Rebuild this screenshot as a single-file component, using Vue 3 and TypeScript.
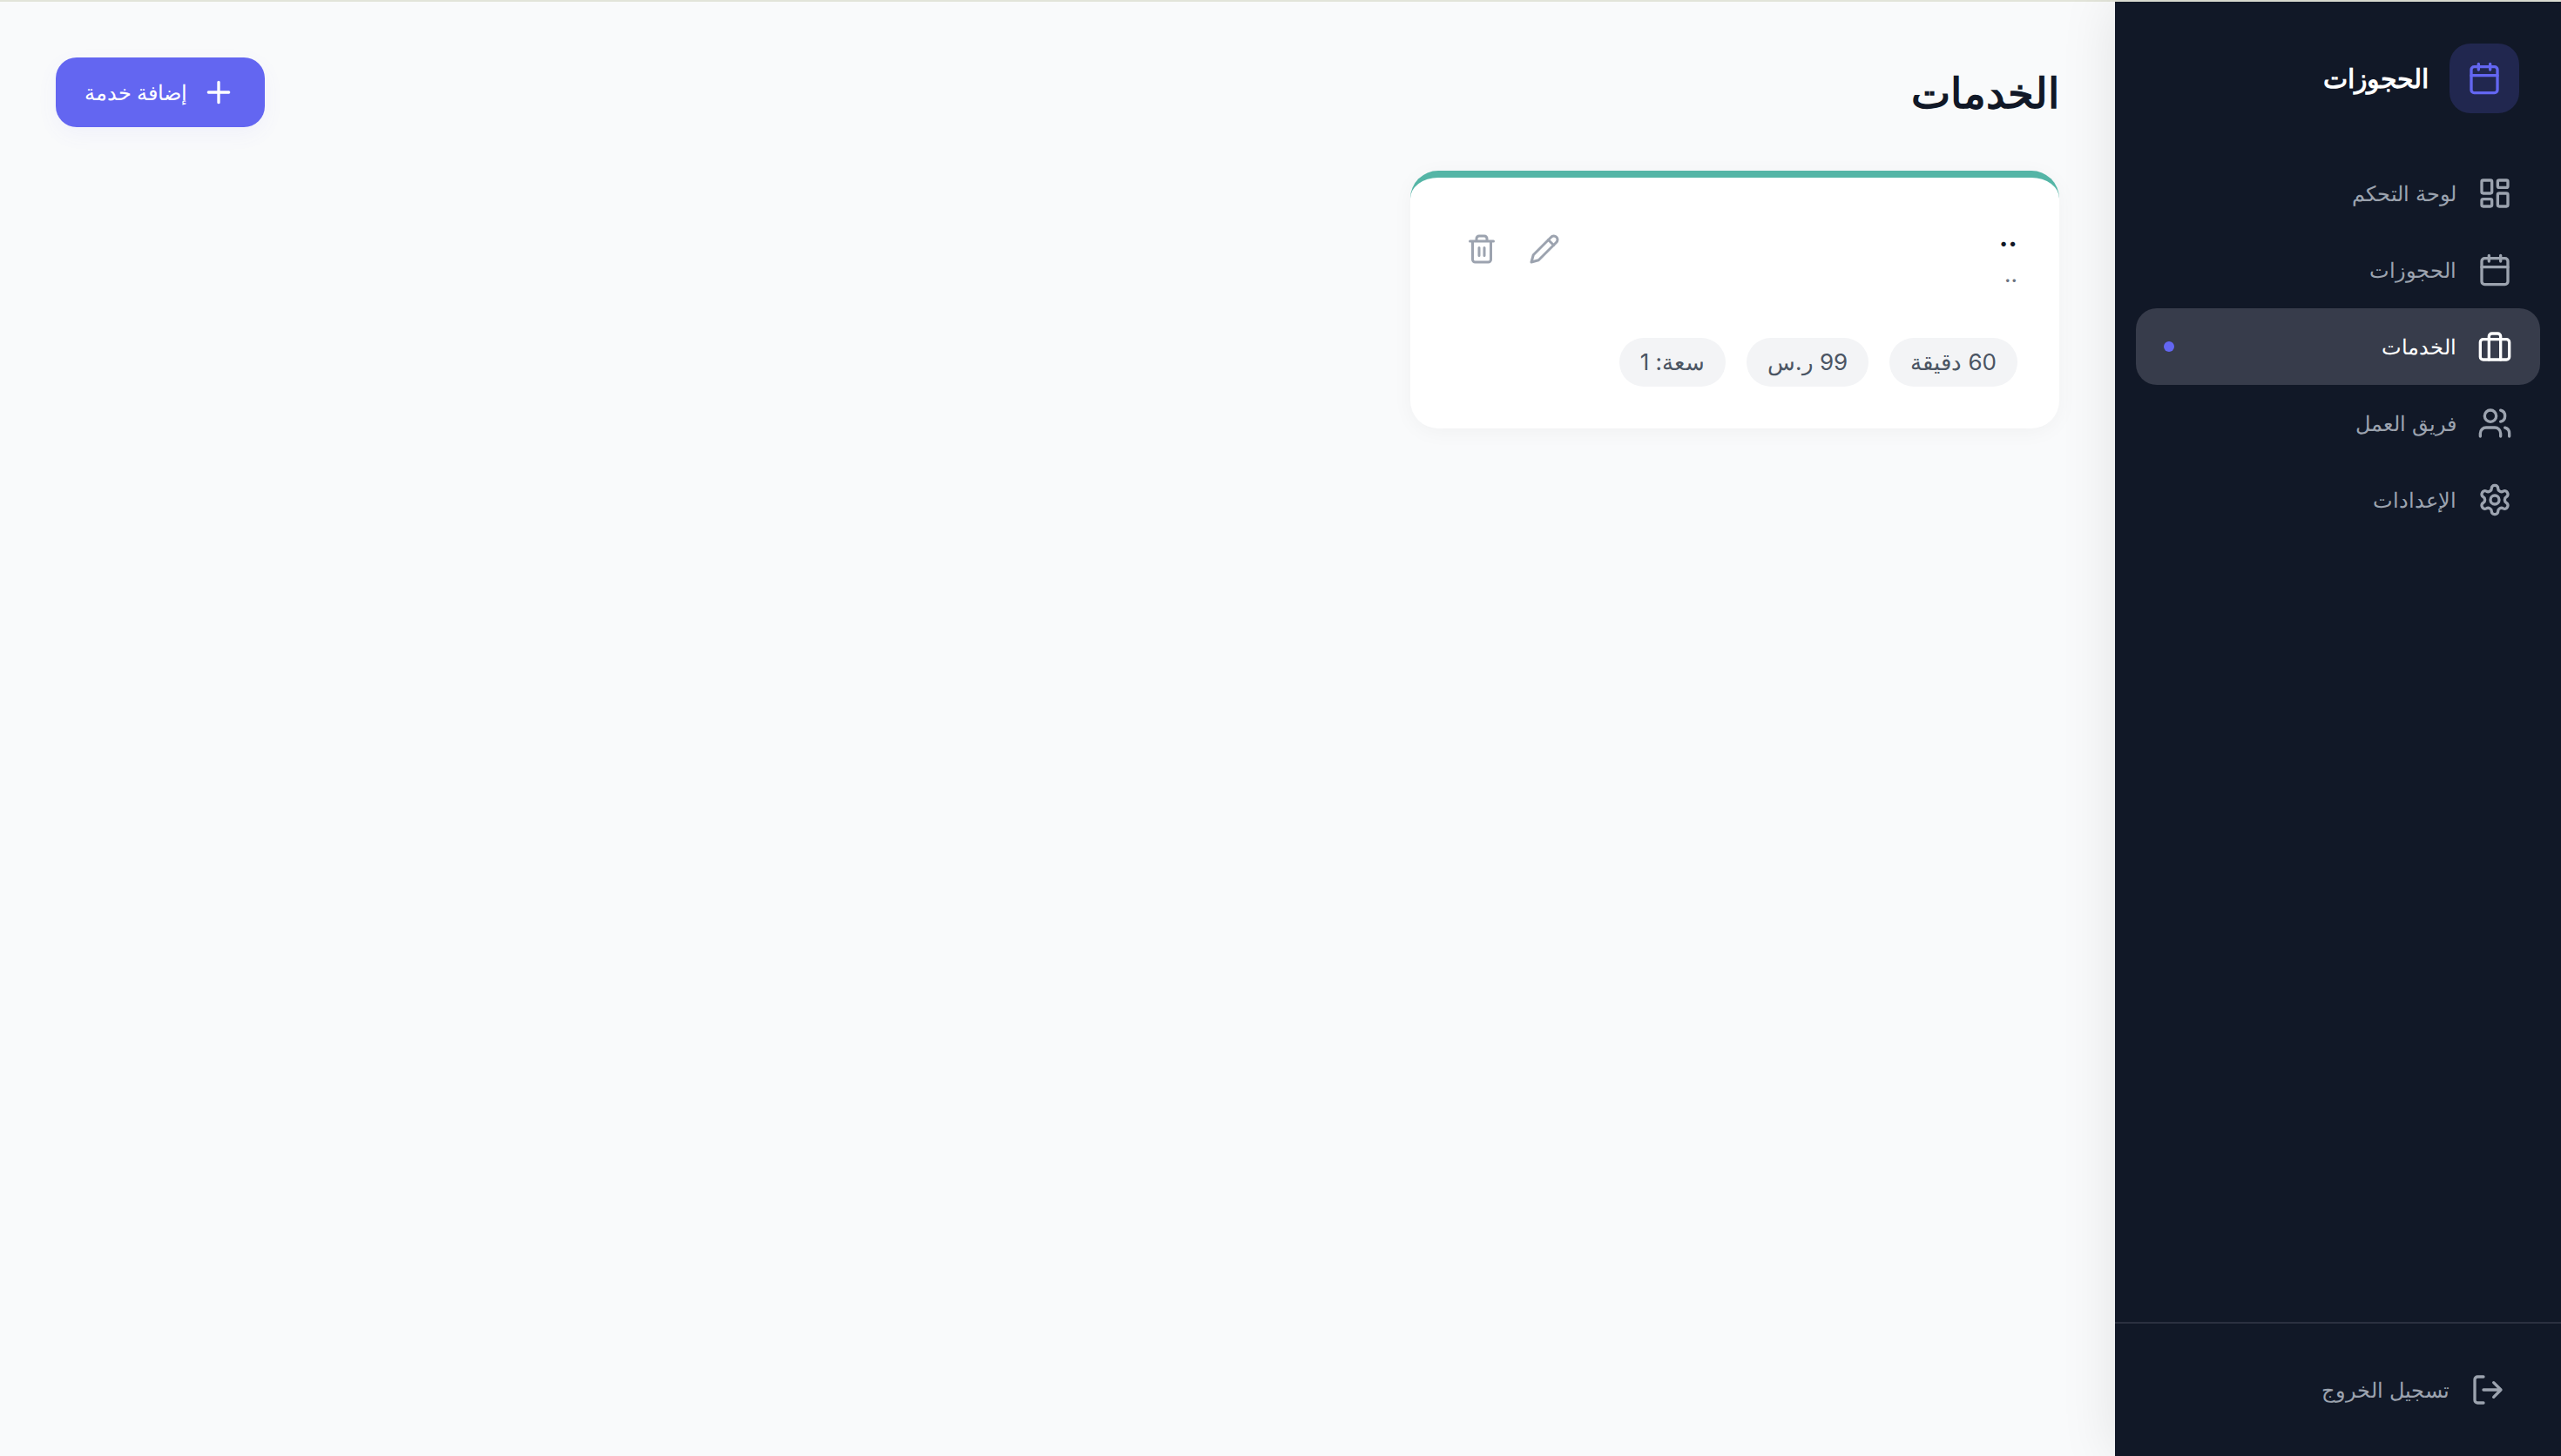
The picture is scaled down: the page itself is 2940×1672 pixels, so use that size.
<script setup lang="ts">
const pills = ['60 دقيقة', '99 ر.س', 'سعة: 1']
</script>

<template>
  <div class="page" dir="rtl">
    <div class="strip"></div>
    <div class="shell">
      <aside class="sidebar">
        <div class="brand">
          <div class="logo">
            <svg class="ic" viewBox="0 0 24 24"><rect x="3" y="4" width="18" height="18" rx="2" /><path d="M16 2v4M8 2v4M3 10h18" /></svg>
          </div>
          <span class="brand-name">الحجوزات</span>
        </div>
        <nav class="nav">
          <a class="item">
            <svg class="ic" viewBox="0 0 24 24"><rect x="3" y="3" width="7" height="9" rx="1" /><rect x="14" y="3" width="7" height="5" rx="1" /><rect x="14" y="12" width="7" height="9" rx="1" /><rect x="3" y="16" width="7" height="5" rx="1" /></svg>
            <span>لوحة التحكم</span>
          </a>
          <a class="item">
            <svg class="ic" viewBox="0 0 24 24"><rect x="3" y="4" width="18" height="18" rx="2" /><path d="M16 2v4M8 2v4M3 10h18" /></svg>
            <span>الحجوزات</span>
          </a>
          <a class="item active">
            <svg class="ic" viewBox="0 0 24 24"><rect x="2" y="7" width="20" height="14" rx="2" /><path d="M16 21V5a2 2 0 0 0-2-2h-4a2 2 0 0 0-2 2v16" /></svg>
            <span>الخدمات</span>
            <i class="dot"></i>
          </a>
          <a class="item">
            <svg class="ic" viewBox="0 0 24 24"><path d="M16 21v-2a4 4 0 0 0-4-4H6a4 4 0 0 0-4 4v2" /><circle cx="9" cy="7" r="4" /><path d="M22 21v-2a4 4 0 0 0-3-3.87M16 3.13a4 4 0 0 1 0 7.75" /></svg>
            <span>فريق العمل</span>
          </a>
          <a class="item">
            <svg class="ic" viewBox="0 0 24 24"><path d="M12.22 2h-.44a2 2 0 0 0-2 2v.18a2 2 0 0 1-1 1.73l-.43.25a2 2 0 0 1-2 0l-.15-.08a2 2 0 0 0-2.73.73l-.22.38a2 2 0 0 0 .73 2.73l.15.1a2 2 0 0 1 1 1.72v.51a2 2 0 0 1-1 1.74l-.15.09a2 2 0 0 0-.73 2.73l.22.38a2 2 0 0 0 2.73.73l.15-.08a2 2 0 0 1 2 0l.43.25a2 2 0 0 1 1 1.73V20a2 2 0 0 0 2 2h.44a2 2 0 0 0 2-2v-.18a2 2 0 0 1 1-1.73l.43-.25a2 2 0 0 1 2 0l.15.08a2 2 0 0 0 2.73-.73l.22-.39a2 2 0 0 0-.73-2.73l-.15-.08a2 2 0 0 1-1-1.74v-.5a2 2 0 0 1 1-1.74l.15-.09a2 2 0 0 0 .73-2.73l-.22-.38a2 2 0 0 0-2.73-.73l-.15.08a2 2 0 0 1-2 0l-.43-.25a2 2 0 0 1-1-1.73V4a2 2 0 0 0-2-2z" /><circle cx="12" cy="12" r="3" /></svg>
            <span>الإعدادات</span>
          </a>
        </nav>
        <div class="foot">
          <button class="logout">
            <svg class="ic" viewBox="0 0 24 24"><path d="M9 21H5a2 2 0 0 1-2-2V5a2 2 0 0 1 2-2h4" /><path d="M16 17l5-5-5-5M21 12H9" /></svg>
            <span>تسجيل الخروج</span>
          </button>
        </div>
      </aside>

      <main class="main">
        <header class="head">
          <h1>الخدمات</h1>
          <button class="add">
            <svg class="ic" viewBox="0 0 24 24"><path d="M5 12h14M12 5v14" /></svg>
            <span>إضافة خدمة</span>
          </button>
        </header>
        <section class="grid">
          <article class="card">
            <div class="card-top">
              <div class="card-text">
                <h3>..</h3>
                <p>..</p>
              </div>
              <div class="actions">
                <button class="act">
                  <svg class="ic-s" viewBox="0 0 24 24"><path d="M17 3a2.85 2.83 0 1 1 4 4L7.5 20.5 2 22l1.5-5.5Z" /><path d="M15 5l4 4" /></svg>
                </button>
                <button class="act">
                  <svg class="ic-s" viewBox="0 0 24 24"><path d="M3 6h18M19 6v14a2 2 0 0 1-2 2H7a2 2 0 0 1-2-2V6M8 6V4a2 2 0 0 1 2-2h4a2 2 0 0 1 2 2v2M10 11v6M14 11v6" /></svg>
                </button>
              </div>
            </div>
            <div class="pills">
              <span v-for="p in pills" :key="p" class="pill">{{ p }}</span>
            </div>
          </article>
        </section>
      </main>
    </div>
  </div>
</template>

<style scoped>
.page {
  width: 2940px;
  height: 1672px;
  display: flex;
  flex-direction: column;
  background: #f9fafb;
  font-family: Inter, "Liberation Sans", sans-serif;
  overflow: hidden;
}
.strip { height: 2px; background: #e2e4d9; flex: none; }
.shell { flex: 1; display: flex; min-height: 0; }
.sidebar {
  width: 512px;
  flex: none;
  background: #111827;
  display: flex;
  flex-direction: column;
  box-shadow: 0 0 60px rgba(0, 0, 0, 0.1);
  position: relative;
}
.brand { display: flex; align-items: center; gap: 24px; padding: 48px; }
.logo {
  width: 80px;
  height: 80px;
  border-radius: 24px;
  background: rgba(99, 102, 241, 0.2);
  color: #6366f1;
  display: flex;
  align-items: center;
  justify-content: center;
}
.ic {
  width: 40px;
  height: 40px;
  flex: none;
  fill: none;
  stroke: currentColor;
  stroke-width: 2;
  stroke-linecap: round;
  stroke-linejoin: round;
}
.ic-s {
  width: 36px;
  height: 36px;
  display: block;
  fill: none;
  stroke: currentColor;
  stroke-width: 2;
  stroke-linecap: round;
  stroke-linejoin: round;
}
.brand-name { color: #fff; font-size: 30px; font-weight: 700; }
.nav { flex: 1; padding: 0 24px; display: flex; flex-direction: column; }
.item {
  height: 88px;
  border-radius: 24px;
  padding: 0 32px;
  display: flex;
  align-items: center;
  gap: 24px;
  color: #9ca3af;
  font-size: 24px;
}
.item.active { background: #373c4b; color: #fff; }
.dot {
  width: 12px;
  height: 12px;
  border-radius: 50%;
  background: #6366f1;
  margin-inline-start: auto;
}
.foot { border-top: 2px solid #2b3040; padding: 32px; }
.logout {
  height: 88px;
  width: 100%;
  padding: 0 32px;
  display: flex;
  align-items: center;
  gap: 24px;
  background: none;
  border: 0;
  color: #9ca3af;
  font: inherit;
  font-size: 24px;
}
.main { flex: 1; padding: 64px; min-width: 0; }
.head { display: flex; align-items: center; justify-content: space-between; height: 80px; margin-bottom: 50px; }
h1 { margin: 0; font-size: 48px; font-weight: 700; color: #111827; }
.add {
  width: 240px;
  height: 80px;
  border: 0;
  border-radius: 24px;
  background: #6366f1;
  color: #fff;
  font: inherit;
  font-size: 24px;
  display: flex;
  align-items: center;
  justify-content: center;
  gap: 16px;
  box-shadow: 0 8px 24px rgba(99, 102, 241, 0.06);
}
.grid { display: grid; grid-template-columns: repeat(3, 1fr); gap: 48px 32px; }
.card {
  height: 296px;
  background: #fff;
  border-radius: 32px;
  border-top: 8px solid #54b5a6;
  padding: 48px;
  box-sizing: border-box;
  box-shadow: 0 4px 24px rgba(0, 0, 0, 0.04);
  display: flex;
  flex-direction: column;
}
.card-top { display: flex; justify-content: space-between; align-items: flex-start; }
h3 { margin: 0; font-size: 32px; font-weight: 700; color: #111827; }
.card-text p { margin: 8px 0 0; font-size: 26px; color: #6b7280; }
.actions { display: flex; gap: 4px; }
.act { background: none; border: 0; padding: 16px; color: #9ca3af; }
.pills { display: flex; gap: 24px; margin-top: auto; }
.pill {
  height: 56px;
  line-height: 56px;
  padding: 0 24px;
  border-radius: 999px;
  background: #f3f4f6;
  color: #4b5563;
  font-size: 26px;
}
</style>
